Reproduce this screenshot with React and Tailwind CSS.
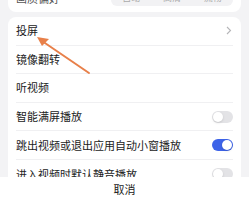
import React from "react";

const rows = [
  { title: "投屏", right: "chevron" },
  { title: "镜像翻转" },
  { title: "听视频" },
  { title: "智能满屏播放", right: "off" },
  { title: "跳出视频或退出应用自动小窗播放", right: "on" },
  { title: "进入视频时默认静音播放", right: "off" },
];

function Toggle({ on }) {
  return (
    <div
      className={`w-[21px] h-[12px] rounded-full flex items-center px-[1px] ${
        on ? "bg-[#3d63e8] justify-end" : "bg-[#e3e3e6] justify-start"
      }`}
    >
      <div className="w-[10px] h-[10px] rounded-full bg-white shadow-sm" />
    </div>
  );
}

function App() {
  return (
    <div
      className="relative w-[249px] h-[202px] overflow-hidden bg-[#f3f3f5] text-[#222]"
      style={{ fontFamily: '"Noto Sans CJK SC", "Noto Sans", sans-serif' }}
    >
      {/* top card, cut off */}
      <div className="mx-2 h-[12px] bg-white rounded-b-lg overflow-hidden">
        <div className="flex items-center justify-between px-2 -mt-[10px] h-[16px]">
          <p className="text-[11px] text-[#555]">画质偏好</p>
          <div className="w-[122px] h-[16px] rounded-md bg-[#f2f2f4] flex items-center justify-around text-[9px] text-[#aaa]">
            <span>自动</span>
            <span>高清</span>
            <span>流畅</span>
          </div>
        </div>
      </div>

      {/* settings card */}
      <div className="mx-2 mt-[5px] bg-white rounded-lg px-2">
        {rows.map((r, i) => (
          <div
            key={i}
            className={`h-[28.6px] flex items-center justify-between ${
              i < rows.length - 1 ? "border-b border-[#f0f0f2]" : ""
            }`}
          >
            <p className="text-[11px] leading-none">{r.title}</p>
            {r.right === "chevron" && (
              <svg width="6" height="9" viewBox="0 0 6 9" className="mr-[1px]">
                <path d="M1 1l3.5 3.5L1 8" fill="none" stroke="#b5b5b8" strokeWidth="1.1" />
              </svg>
            )}
            {r.right === "on" && <Toggle on />}
            {r.right === "off" && <Toggle />}
          </div>
        ))}
      </div>

      {/* arrow annotation */}
      <svg className="absolute left-0 top-0" width="249" height="202">
        <line x1="89" y1="73" x2="42" y2="41" stroke="#e8804a" strokeWidth="2" strokeLinecap="round" />
        <path d="M37 37 L49 39 L42 46 Z" fill="#e8804a" />
      </svg>

      {/* bottom sheet */}
      <div className="absolute left-0 bottom-0 w-full h-[25px] bg-white flex items-center justify-center">
        <p className="text-[11px] text-[#222] leading-none">取消</p>
      </div>
    </div>
  );
}

export default App;
